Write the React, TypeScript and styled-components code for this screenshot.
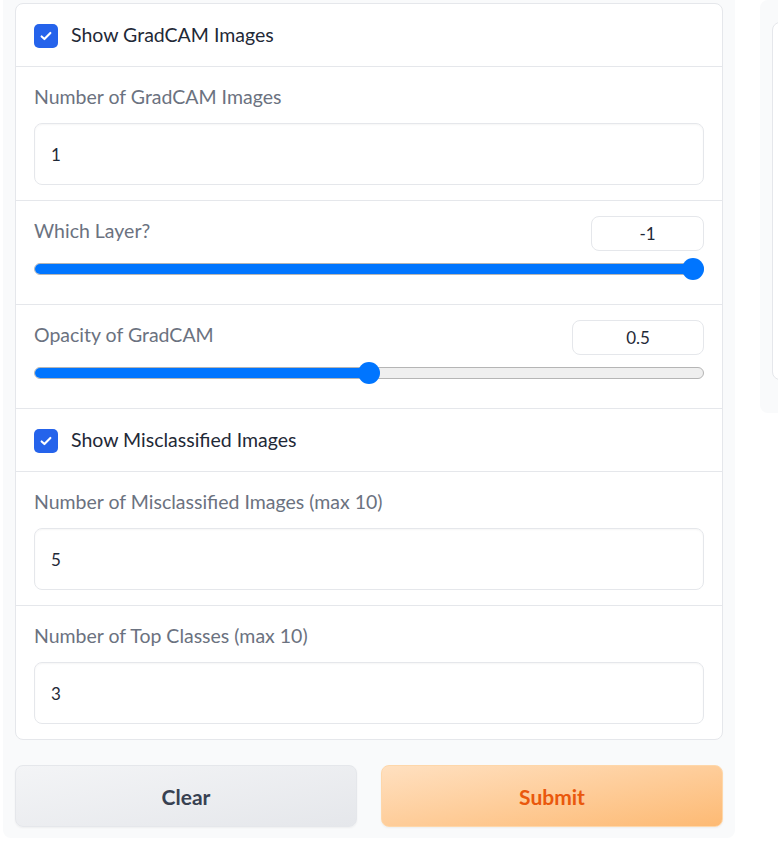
import styled, { createGlobalStyle } from "styled-components";

const GlobalStyle = createGlobalStyle`
  body {
    margin: 0;
    background: #ffffff;
    font-family: "Lato", "Noto Sans", sans-serif;
  }
`;

const Page = styled.div`
  display: flex;
  gap: 25px;
  padding-left: 3px;
  align-items: flex-start;
  width: 778px;
  overflow: hidden;
`;

const Column = styled.div`
  width: 732px;
  flex-shrink: 0;
  box-sizing: border-box;
  background: #f9fafb;
  border-radius: 0 0 8px 8px;
  padding: 3px 12px 11px;
  display: flex;
  flex-direction: column;
  gap: 25px;
`;

const SidePanel = styled.div`
  flex-shrink: 0;
  width: 300px;
  height: 413px;
  box-sizing: border-box;
  background: #f9fafb;
  border-radius: 8px;
  padding: 22px 12px 35px;
`;

const SideCard = styled.div`
  height: 100%;
  background: #ffffff;
  border: 1px solid #e5e7eb;
  border-radius: 8px;
`;

const Card = styled.div`
  background: #ffffff;
  border: 1px solid #e5e7eb;
  border-radius: 8px;
  overflow: hidden;
`;

const Row = styled.div<{ $last?: boolean }>`
  border-bottom: ${(p) => (p.$last ? "none" : "1px solid #e5e7eb")};
  padding: 17px 18px 15px;
  display: flex;
  flex-direction: column;
`;

const CheckRow = styled.div`
  border-bottom: 1px solid #e5e7eb;
  height: 62px;
  padding: 0 18px;
  display: flex;
  align-items: center;
  gap: 13px;
`;

const Box = styled.span`
  width: 24px;
  height: 24px;
  border-radius: 5px;
  background: #2563eb;
  display: flex;
  align-items: center;
  justify-content: center;
  margin-top: 1px;
`;

const CheckLabel = styled.span`
  font-size: 19.5px;
  color: #1f2937;
  margin-top: -1px;
`;

const Label = styled.span`
  font-size: 19.5px;
  line-height: 26px;
  color: #6b7280;
`;

const TextBox = styled.div`
  margin-top: 13px;
  height: 62px;
  box-sizing: border-box;
  border: 1px solid #e5e7eb;
  border-radius: 8px;
  box-shadow: inset 0 1px 2px rgba(0, 0, 0, 0.04);
  padding: 0 16px;
  display: flex;
  align-items: center;
  font-size: 17px;
  color: #1f2937;
`;

const SliderRow = styled.div`
  border-bottom: 1px solid #e5e7eb;
  padding: 15px 18px 24px;
  display: flex;
  flex-direction: column;
  gap: 7px;
`;

const SliderHead = styled.div`
  display: flex;
  justify-content: space-between;
  align-items: flex-start;
`;

const SliderLabel = styled(Label)`
  margin-top: 2px;
`;

const NumBox = styled.div<{ $w: number }>`
  width: ${(p) => p.$w}px;
  height: 35px;
  box-sizing: border-box;
  border: 1px solid #e5e7eb;
  border-radius: 8px;
  display: flex;
  align-items: center;
  justify-content: center;
  font-size: 17px;
  color: #1f2937;
`;

const Track = styled.div`
  position: relative;
  height: 22px;
  display: flex;
  align-items: center;
`;

const Rail = styled.div`
  width: 100%;
  height: 12px;
  box-sizing: border-box;
  border-radius: 6px;
  background: #efefef;
  border: 1px solid #b5b5b5;
  overflow: hidden;
`;

const Fill = styled.div`
  height: 100%;
  background: #0075ff;
`;

const Thumb = styled.div`
  position: absolute;
  top: 0;
  width: 22px;
  height: 22px;
  margin-left: -11px;
  border-radius: 50%;
  background: #0075ff;
`;

const Buttons = styled.div`
  display: grid;
  grid-template-columns: 1fr 1fr;
  gap: 24px;
`;

const Button = styled.button<{ $primary?: boolean }>`
  height: 62px;
  border-radius: 8px;
  font-family: inherit;
  font-size: 21px;
  font-weight: 700;
  border: 1px solid ${(p) => (p.$primary ? "#fed7aa" : "#e5e7eb")};
  color: ${(p) => (p.$primary ? "#ea580c" : "#374151")};
  background: ${(p) =>
    p.$primary
      ? "linear-gradient(to bottom right, #ffe0c0, #fdba74)"
      : "linear-gradient(to bottom right, #f3f4f6, #e5e7eb)"};
  box-shadow: 0 1px 2px rgba(0, 0, 0, 0.05);
`;

const Check = () => (
  <Box>
    <svg width="14" height="14" viewBox="0 0 16 16">
      <path d="M3 8.5l3.2 3L13 4.5" fill="none" stroke="#fff" strokeWidth="2.4" strokeLinecap="round" strokeLinejoin="round" />
    </svg>
  </Box>
);

const Slider = ({ label, value, width, pos }: { label: string; value: string; width: number; pos: number }) => (
  <SliderRow>
    <SliderHead>
      <SliderLabel>{label}</SliderLabel>
      <NumBox $w={width}>{value}</NumBox>
    </SliderHead>
    <Track>
      <Rail>
        <Fill style={{ width: `calc(11px + ${pos} * (100% - 22px))` }} />
      </Rail>
      <Thumb style={{ left: `calc(11px + ${pos} * (100% - 22px))` }} />
    </Track>
  </SliderRow>
);

export default function App() {
  return (
    <>
      <GlobalStyle />
      <Page>
        <Column>
          <Card>
            <CheckRow>
              <Check />
              <CheckLabel>Show GradCAM Images</CheckLabel>
            </CheckRow>
            <Row>
              <Label>Number of GradCAM Images</Label>
              <TextBox>1</TextBox>
            </Row>
            <Slider label="Which Layer?" value="-1" width={113} pos={1} />
            <Slider label="Opacity of GradCAM" value="0.5" width={132} pos={0.5} />
            <CheckRow>
              <Check />
              <CheckLabel>Show Misclassified Images</CheckLabel>
            </CheckRow>
            <Row>
              <Label>Number of Misclassified Images (max 10)</Label>
              <TextBox>5</TextBox>
            </Row>
            <Row $last>
              <Label>Number of Top Classes (max 10)</Label>
              <TextBox>3</TextBox>
            </Row>
          </Card>
          <Buttons>
            <Button>Clear</Button>
            <Button $primary>Submit</Button>
          </Buttons>
        </Column>
        <SidePanel>
          <SideCard />
        </SidePanel>
      </Page>
    </>
  );
}
